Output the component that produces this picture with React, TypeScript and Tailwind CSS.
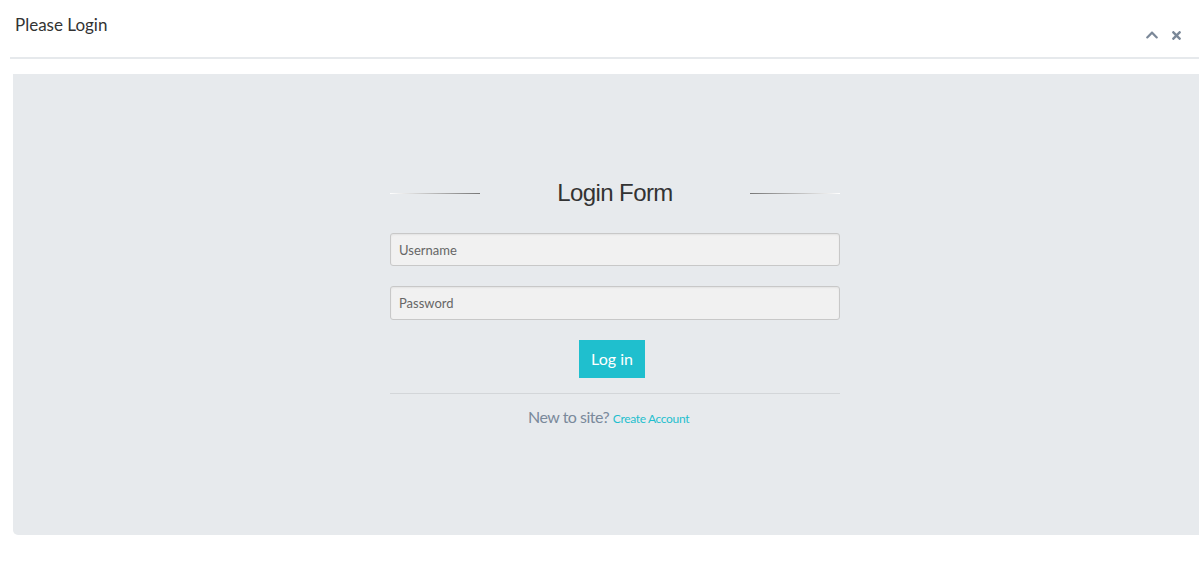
import { FaChevronUp, FaTimes } from "react-icons/fa";

const sans = { fontFamily: '"Source Sans Pro", Lato, "Open Sans", sans-serif' };

export default function App() {
  return (
    <div className="h-[562px] w-[1199px] overflow-hidden bg-white" style={sans}>
      <div className="ml-[10px] flex h-[59px] items-start justify-between border-b-2 border-[#e6e9ec]">
        <h2 className="mt-[14px] pl-[5px] text-[17px] leading-[22px] text-[#333]">Please Login</h2>
        <div className="mr-[16px] mt-[28px] flex items-center gap-[11px] text-[#7b8898]">
          <FaChevronUp className="h-[14px] w-[14px]" />
          <FaTimes className="h-[13px] w-[13px]" />
        </div>
      </div>

      <div className="ml-[13px] mt-[15px] h-[461px] w-[1204px] rounded-bl-[5px] bg-[#e7eaed] pt-[105px]">
        <div className="mx-auto w-[450px]">
          <div className="flex items-center justify-between">
            <span className="h-px w-[90px] bg-gradient-to-r from-white to-[#777]" />
            <h1
              className="text-[24px] leading-[28px] text-[#333]"
              style={{ fontFamily: '"Liberation Sans", Arial, sans-serif', letterSpacing: "-0.6px" }}
            >
              Login Form
            </h1>
            <span className="h-px w-[90px] bg-gradient-to-r from-[#777] to-white" />
          </div>

          <form className="mt-[26px] flex flex-col">
            <input
              type="text"
              placeholder="Username"
              className="h-[33px] rounded-[3px] border border-[#c8c8c8] bg-[#f1f1f1] px-[8px] text-[13px] text-[#555] shadow-[inset_0_1px_2px_rgba(0,0,0,0.06)] placeholder:text-[#666] focus:outline-none"
            />
            <input
              type="password"
              placeholder="Password"
              className="mt-[20px] h-[34px] rounded-[3px] border border-[#c8c8c8] bg-[#f1f1f1] px-[8px] text-[13px] text-[#555] shadow-[inset_0_1px_2px_rgba(0,0,0,0.06)] placeholder:text-[#666] focus:outline-none"
            />
            <button
              type="button"
              className="ml-[189px] mt-[20px] h-[38px] w-[66px] bg-[#1fbfce] text-[16px] text-white"
            >
              Log in
            </button>
          </form>

          <div className="mt-[15px] border-t border-[#d3d6d9] pl-[138px] pt-[11px]">
            <span className="text-[16px] tracking-[-0.5px] text-[#7a899b]">New to site? </span>
            <a href="#" className="text-[12px] tracking-[-0.35px] text-[#1fbfce]">
              Create Account
            </a>
          </div>
        </div>
      </div>
    </div>
  );
}
